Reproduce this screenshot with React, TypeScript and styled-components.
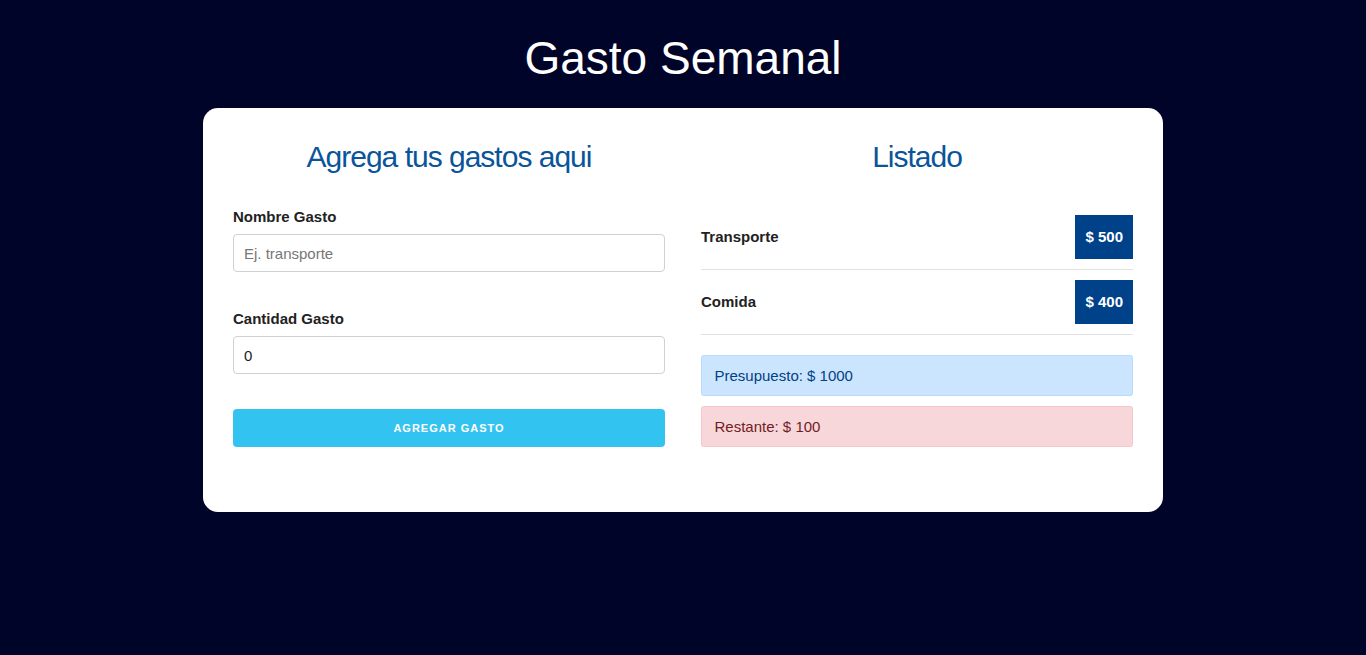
import React from "react";
import styled, { createGlobalStyle } from "styled-components";

const GlobalStyle = createGlobalStyle`
  html { font-size: 62.5%; }
  body {
    margin: 0;
    background: #000428;
    font-family: "Liberation Sans", Arial, sans-serif;
    font-size: 15px;
    line-height: 1.6;
    color: #222;
  }
  * { box-sizing: border-box; }
`;

const Page = styled.div`
  min-height: 655px;
  padding-top: 31px;
`;

const Title = styled.h1`
  margin: 0 0 22px;
  text-align: center;
  color: #fff;
  font-size: 46px;
  font-weight: 400;
  line-height: 55px;
`;

const Card = styled.main`
  width: 960px;
  margin: 0 auto;
  background: #fff;
  border-radius: 15px;
  padding: 30px 30px 55px;
  display: grid;
  grid-template-columns: 432px 432px;
  column-gap: 36px;
  align-items: start;
`;

const Column = styled.section`
  display: flex;
  flex-direction: column;
`;

const Heading = styled.h2`
  margin: 0 0 29.5px;
  text-align: center;
  color: #0a5499;
  font-size: 30px;
  font-weight: 400;
  letter-spacing: -1px;
  line-height: 37.5px;
`;

const Field = styled.div`
  display: flex;
  flex-direction: column;
  margin-bottom: 20px;
`;

const Label = styled.label`
  display: block;
  font-weight: 700;
  font-size: 15px;
  line-height: 24px;
  margin-bottom: 5px;
  color: #222;
`;

const Input = styled.input`
  height: 38px;
  width: 100%;
  padding: 6px 10px;
  border: 1px solid #d1d1d1;
  border-radius: 4px;
  font-family: "Liberation Sans", Arial, sans-serif;
  font-size: 15px;
  color: #222;
  margin-bottom: 15px;
  background: #fff;
  outline: none;
  &::placeholder { color: #777; }
`;

const Button = styled.button`
  height: 38px;
  width: 100%;
  border: none;
  border-radius: 4px;
  background: #33c3f0;
  color: #fff;
  font-family: "Liberation Sans", Arial, sans-serif;
  font-size: 11px;
  font-weight: 700;
  letter-spacing: 1px;
  text-transform: uppercase;
  cursor: pointer;
`;

const List = styled.ul`
  list-style: none;
  margin: 0 0 20px;
  padding: 0;
`;

const Row = styled.li`
  display: flex;
  align-items: center;
  justify-content: space-between;
  padding: 10px 0;
  border-bottom: 1px solid #e1e1e1;
`;

const ItemName = styled.span`
  font-weight: 700;
  font-size: 15px;
  color: #222;
`;

const Badge = styled.span`
  height: 44px;
  padding: 0 10px;
  display: flex;
  align-items: center;
  background: #00428a;
  color: #fff;
  font-weight: 700;
  font-size: 15px;
`;

const Alert = styled.div<{ $tone: "primary" | "danger" }>`
  padding: 7.5px 12.5px;
  border: 1px solid ${(p) => (p.$tone === "primary" ? "#b8daff" : "#f5c6cb")};
  background: ${(p) => (p.$tone === "primary" ? "#cce5ff" : "#f8d7da")};
  color: ${(p) => (p.$tone === "primary" ? "#004085" : "#721c24")};
  border-radius: 2.5px;
  font-size: 15px;
  line-height: 24px;
  margin-bottom: 10px;
`;

const gastos = [
  { nombre: "Transporte", cantidad: 500 },
  { nombre: "Comida", cantidad: 400 },
];

export default function App() {
  return (
    <Page>
      <GlobalStyle />
      <Title>Gasto Semanal</Title>
      <Card>
        <Column>
          <Heading>Agrega tus gastos aqui</Heading>
          <Field>
            <Label>Nombre Gasto</Label>
            <Input type="text" placeholder="Ej. transporte" />
          </Field>
          <Field>
            <Label>Cantidad Gasto</Label>
            <Input type="number" defaultValue={0} />
          </Field>
          <Button type="button">Agregar Gasto</Button>
        </Column>
        <Column>
          <Heading>Listado</Heading>
          <List>
            {gastos.map((g) => (
              <Row key={g.nombre}>
                <ItemName>{g.nombre}</ItemName>
                <Badge>$ {g.cantidad}</Badge>
              </Row>
            ))}
          </List>
          <Alert $tone="primary">Presupuesto: $ 1000</Alert>
          <Alert $tone="danger">Restante: $ 100</Alert>
        </Column>
      </Card>
    </Page>
  );
}
